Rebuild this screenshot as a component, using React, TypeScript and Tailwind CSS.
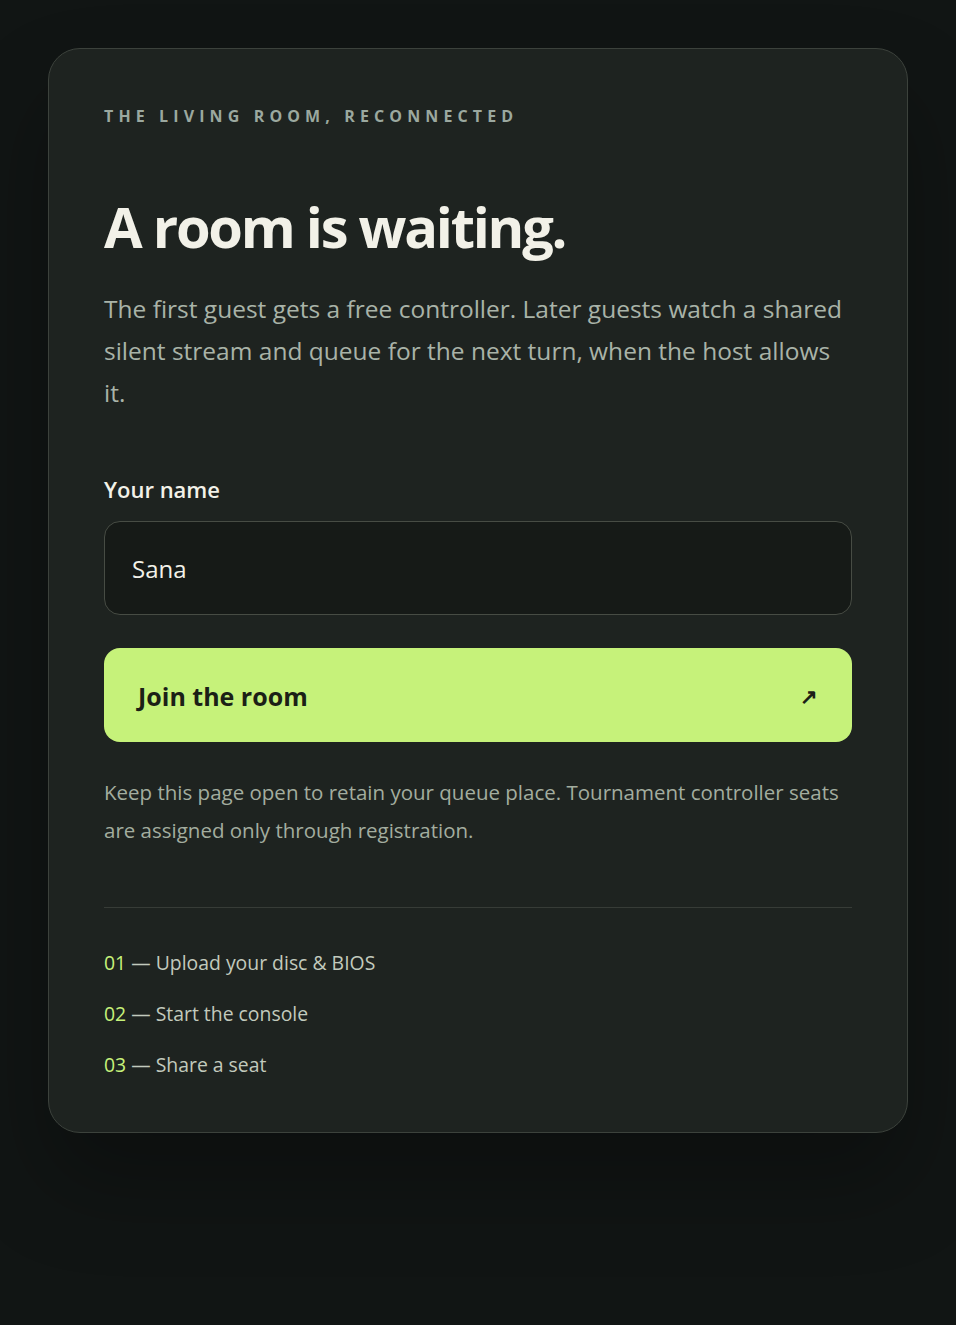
import React, { useState } from 'react';

const STEPS = [
  { n: '01', label: 'Upload your disc & BIOS' },
  { n: '02', label: 'Start the console' },
  { n: '03', label: 'Share a seat' },
];

const App: React.FC = () => {
  const [name, setName] = useState('Sana');

  return (
    <main className="min-h-screen bg-[#111514] px-[48px] pt-[48px] pb-[48px] font-['Open_Sans','Noto_Sans',sans-serif]">
      <section className="rounded-[32px] border border-[#3c423c] bg-[#1e2320] px-[55px] pt-[56px] pb-[53px] shadow-[0_50px_90px_rgba(0,0,0,0.28)]">
        {/* Eyebrow */}
        <p className="text-[16px] font-bold uppercase leading-[22px] tracking-[0.32em] text-[#9ba89f]">
          The living room, reconnected
        </p>

        <h1 className="mt-[67px] text-[56px] font-bold leading-[64px] tracking-[-0.04em] text-[#f2f1e8]">
          A room is waiting.
        </h1>

        <p className="mt-[30px] text-[24.5px] leading-[42px] text-[#a9b3a8]">
          The first guest gets a free controller. Later guests watch a shared silent stream and queue for the next
          turn, when the host allows it.
        </p>

        {/* Form */}
        <label htmlFor="name" className="mt-[61px] block text-[22px] font-semibold leading-[28px] text-[#f2f1e8]">
          Your name
        </label>
        <input
          id="name"
          value={name}
          onChange={e => setName(e.target.value)}
          className="mt-[18px] block h-[94px] w-full rounded-[16px] border-[1.5px] border-[#474c44] bg-[#161a17] px-[27px] text-[24px] text-[#f2f1e8] outline-none"
        />

        <button className="mt-[33px] flex h-[94px] w-full items-center justify-between rounded-[16px] bg-[#c6f27a] pt-[4px] pl-[34px] pr-[34px] text-left">
          <span className="text-[25px] font-bold text-[#1b2016]">Join the room</span>
          <span className="text-[21px] font-bold text-[#1b2016]">↗</span>
        </button>

        <p className="mt-[31px] text-[20.5px] leading-[38px] text-[#a3ad9f]">
          Keep this page open to retain your queue place. Tournament controller seats are assigned only through
          registration.
        </p>

        <div className="mt-[58px] h-px bg-[#373c37]" />

        <ol className="mt-[41px] flex flex-col gap-[23px]">
          {STEPS.map(step => (
            <li key={step.n} className="text-[19.4px] leading-[28px] text-[#c2cabd]">
              <span className="text-[#c6f27a]">{step.n}</span> — {step.label}
            </li>
          ))}
        </ol>
      </section>
    </main>
  );
};

export default App;
